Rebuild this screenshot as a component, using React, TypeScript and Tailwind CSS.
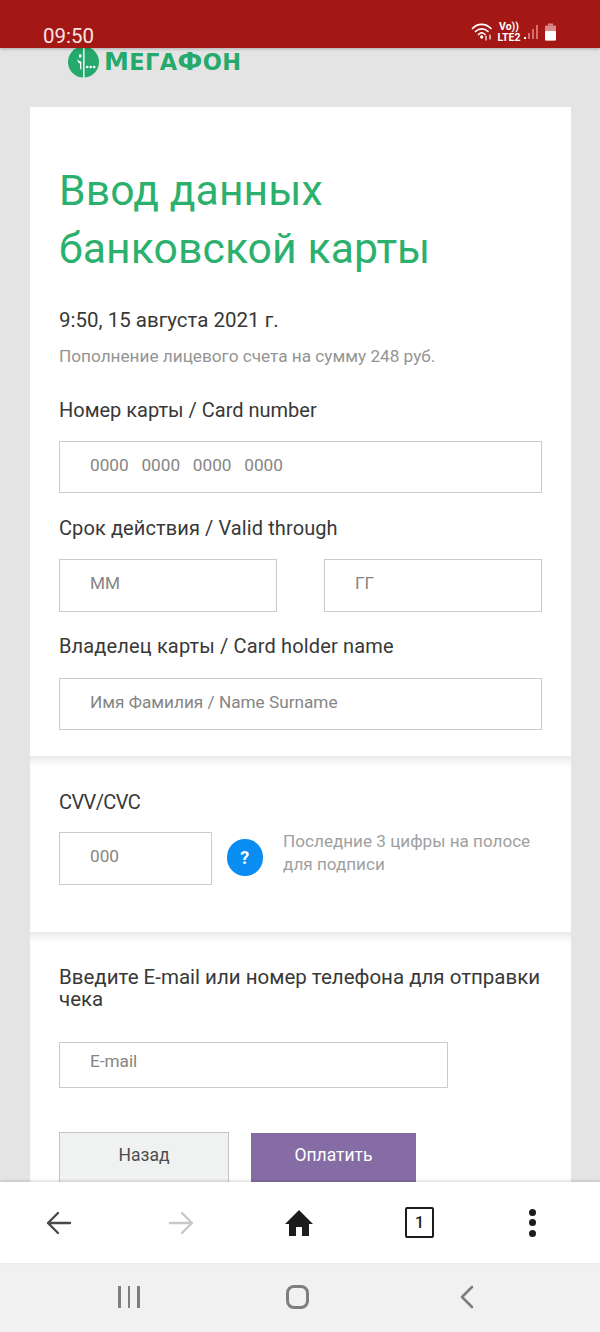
const ROBOTO = "font-['Roboto',sans-serif]";

function Field({ placeholder, className }: { placeholder: string; className: string }) {
  return (
    <div className={`flex items-center border border-[#cbcbcb] bg-white pb-[3px] pl-[30px] text-[17.2px] text-[#858585] ${className}`}>
      <span className="whitespace-pre">{placeholder}</span>
    </div>
  );
}

function Label({ children, className = "" }: { children: React.ReactNode; className?: string }) {
  return <div className={`text-[20px] leading-[26px] text-[#383838] ${className}`}>{children}</div>;
}

function Logo() {
  return (
    <div className="flex h-[30px] items-center pl-[68px]">
      <svg width="31" height="32" viewBox="0 0 31 32" className="shrink-0">
        <circle cx="15.5" cy="16" r="15.5" fill="#26a96c" />
        {/* vertical cut through the circle */}
        <path d="M15 0h1.600v32H15z" fill="#e8f5ef" />
        {/* the little face on the left of the cut */}
        <path d="M11 8.500h2.400v3H11zM9.500 13c.5 1.500 2 2.400 3.800 2.400v8.600c-.8-.5-1.300-1.300-1.300-2.400v-4.200c-1.700-.4-2.800-1.900-2.500-4.400z" fill="#fff" />
        <circle cx="19.200" cy="21" r="1.300" fill="#fff" />
        <circle cx="22.700" cy="21" r="1.300" fill="#fff" />
        <circle cx="26.200" cy="21" r="1.300" fill="#fff" />
      </svg>
      <span className="ml-[5px] font-['DejaVu_Sans',sans-serif] text-[25px] leading-[30px] font-bold tracking-[0.4px] whitespace-pre text-[#26a96c]">
        М<span className="text-[22.500px]">ЕГА</span>Ф<span className="text-[22.500px]">ОН</span>
      </span>
    </div>
  );
}

function StatusBar() {
  return (
    <div className="relative z-10 flex h-[48px] shrink-0 items-end justify-between bg-[#a31715] pr-[43px] pl-[43px] shadow-[0_1px_3px_rgba(0,0,0,0.25)]">
      <span className="text-[20.5px] leading-[24px] text-[#f6e5e3]">09:50</span>
      <div className="mb-[5px] flex items-center">
        <svg width="24" height="20" viewBox="0 0 24 20" fill="none" stroke="#fff" strokeWidth="1.700" strokeLinecap="round">
          <path d="M1.500 6.500C6.500 1 14.500 1 20 6.500" />
          <path d="M4.500 9.500c3.500-3.500 9-3.500 12.500 0" />
          <path d="M7.500 12.500c2-2 4.500-2 6.500 0" />
          <circle cx="10.700" cy="15" r="0.800" fill="#fff" />
          <path d="M15 14v4M19 17v-4" strokeWidth="1.200" />
        </svg>
        <div className="ml-[2px] flex w-[24px] flex-col items-center text-[10.5px] leading-[11px] font-bold text-[#fff]">
          <span>Vo))</span>
          <span>LTE2</span>
        </div>
        <svg width="16" height="18" viewBox="0 0 16 18" className="ml-[2px]">
          <rect x="1" y="14" width="2" height="2" fill="#fff" />
          <rect x="5" y="10" width="2" height="6" fill="#d86f6c" />
          <rect x="9" y="6" width="2" height="10" fill="#d86f6c" />
          <rect x="13" y="2" width="2" height="14" fill="#d86f6c" />
        </svg>
        <svg width="13" height="18" viewBox="0 0 13 18" className="ml-[5px]">
          <rect x="4" y="0.500" width="5" height="2" fill="#dc8a88" />
          <rect x="1" y="2.500" width="11" height="15" rx="1" fill="#dc8a88" />
          <rect x="1" y="8" width="11" height="9.500" rx="1" fill="#fff" />
        </svg>
      </div>
    </div>
  );
}

function BottomBar() {
  return (
    <div className="relative z-10 flex h-[81px] shrink-0 items-center bg-white pl-[46px] shadow-[0_-1px_3px_rgba(0,0,0,0.18)]">
      <svg width="26" height="26" viewBox="0 0 26 26" fill="none" stroke="#4a4a4a" strokeWidth="2.400" strokeLinecap="round" strokeLinejoin="round">
        <path d="M24 13H2M12 3 2 13l10 10" />
      </svg>
      <svg width="26" height="26" viewBox="0 0 26 26" fill="none" stroke="#c8c8c8" strokeWidth="2.400" strokeLinecap="round" strokeLinejoin="round" className="ml-[96px]">
        <path d="M2 13h22M14 3l10 10-10 10" />
      </svg>
      <svg width="30" height="28" viewBox="0 0 30 28" className="ml-[90px]">
        <path d="M15 1 1 15h4v12h7v-9h6v9h7V15h4z" fill="#1c1c1c" />
      </svg>
      <div className="ml-[91px] flex h-[31px] w-[29px] items-center justify-center rounded-[2px] border-2 border-[#1c1c1c] text-[16px] font-medium text-[#1c1c1c]">
        1
      </div>
      <div className="ml-[95px] flex flex-col gap-[3.500px]">
        <span className="size-[7px] rounded-full bg-[#1c1c1c]" />
        <span className="size-[7px] rounded-full bg-[#1c1c1c]" />
        <span className="size-[7px] rounded-full bg-[#1c1c1c]" />
      </div>
    </div>
  );
}

function SystemBar() {
  return (
    <div className="flex h-[69px] shrink-0 items-center bg-[#f1f1f1] pb-[1px] pl-[118px]">
      <div className="flex gap-[7px]">
        <span className="h-[22px] w-[2.500px] bg-[#7e7e7e]" />
        <span className="h-[22px] w-[2.500px] bg-[#7e7e7e]" />
        <span className="h-[22px] w-[2.500px] bg-[#7e7e7e]" />
      </div>
      <div className="ml-[146.500px] h-[24px] w-[23px] rounded-[8px] border-[3px] border-[#7e7e7e]" />
      <svg width="14" height="24" viewBox="0 0 14 24" fill="none" stroke="#7e7e7e" strokeWidth="2.600" strokeLinecap="round" strokeLinejoin="round" className="ml-[151px]">
        <path d="M12 2 2 12l10 10" />
      </svg>
    </div>
  );
}

export default function App() {
  return (
    <div className={`flex h-[1332px] w-[600px] flex-col overflow-hidden bg-[#e4e4e4] ${ROBOTO}`}>
      <StatusBar />
      <div className="min-h-0 flex-1 overflow-hidden">
        <div className="-mt-[1px] h-[60px]">
          <Logo />
        </div>
        <div className="mr-[29px] ml-[30px] bg-white">
          <section className="px-[29px] pt-[54px] pb-[26px]">
            <h1 className="text-[42.700px] leading-[58px] font-normal tracking-[0.1px] text-[#2bb16d]">
              Ввод данных
              <br />
              банковской карты
            </h1>
            <div className="mt-[29px] text-[20.500px] leading-[28px] text-[#383838]">9:50, 15 августа 2021 г.</div>
            <div className="mt-[8px] text-[17.200px] leading-[28px] text-[#949494]">
              Пополнение лицевого счета на сумму 248 руб.
            </div>
            <Label className="mt-[27px]">Номер карты / Card number</Label>
            <Field placeholder="0000   0000   0000   0000" className="mt-[18px] h-[52px] w-[483px]" />
            <Label className="mt-[22px] tracking-[0.1px]">Срок действия / Valid through</Label>
            <div className="mt-[18px] flex gap-[47px]">
              <Field placeholder="ММ" className="h-[53px] w-[218px]" />
              <Field placeholder="ГГ" className="h-[53px] w-[218px]" />
            </div>
            <Label className="mt-[21px] tracking-[0.15px]">Владелец карты / Card holder name</Label>
            <Field placeholder="Имя Фамилия / Name Surname" className="mt-[19px] h-[52px] w-[483px]" />
          </section>

          <section className="px-[29px] pt-[33px] pb-[47px] shadow-[inset_0_10px_10px_-6px_rgba(0,0,0,0.11)]">
            <Label className="tracking-[-0.6px]">CVV/CVC</Label>
            <div className="mt-[17px] flex h-[53px] items-start">
              <Field placeholder="000" className="h-[53px] w-[154px]" />
              <div className="mt-[7px] ml-[15px] flex size-[37px] items-center justify-center rounded-full bg-[#0a8df2] text-[18px] font-bold text-white">
                ?
              </div>
              <div className="-mt-[2px] ml-[20px] w-[262px] text-[17.100px] leading-[23px] text-[#a0a0a0]">
                Последние 3 цифры на полосе для подписи
              </div>
            </div>
          </section>

          <section className="px-[29px] pt-[34px] shadow-[inset_0_10px_10px_-6px_rgba(0,0,0,0.11)]">
            <div className="text-[20.500px] leading-[22px] text-[#383838]">
              Введите E-mail или номер телефона для отправки чека
            </div>
            <Field placeholder="E-mail" className="mt-[32px] h-[46px] w-[389px] items-start pt-[6px]" />
            <div className="mt-[44px] flex items-start gap-[22px]">
              <button className="h-[60px] w-[170px] border border-[#c4c4c4] bg-[#f0f2f1] pb-[13px] text-[17.500px] text-[#4e4e4e]">
                Назад
              </button>
              <button className="mt-[1px] h-[60px] w-[165px] bg-[#866ca5] pb-[15px] text-[17.500px] text-white">
                Оплатить
              </button>
            </div>
          </section>
        </div>
      </div>
      <BottomBar />
      <SystemBar />
    </div>
  );
}
